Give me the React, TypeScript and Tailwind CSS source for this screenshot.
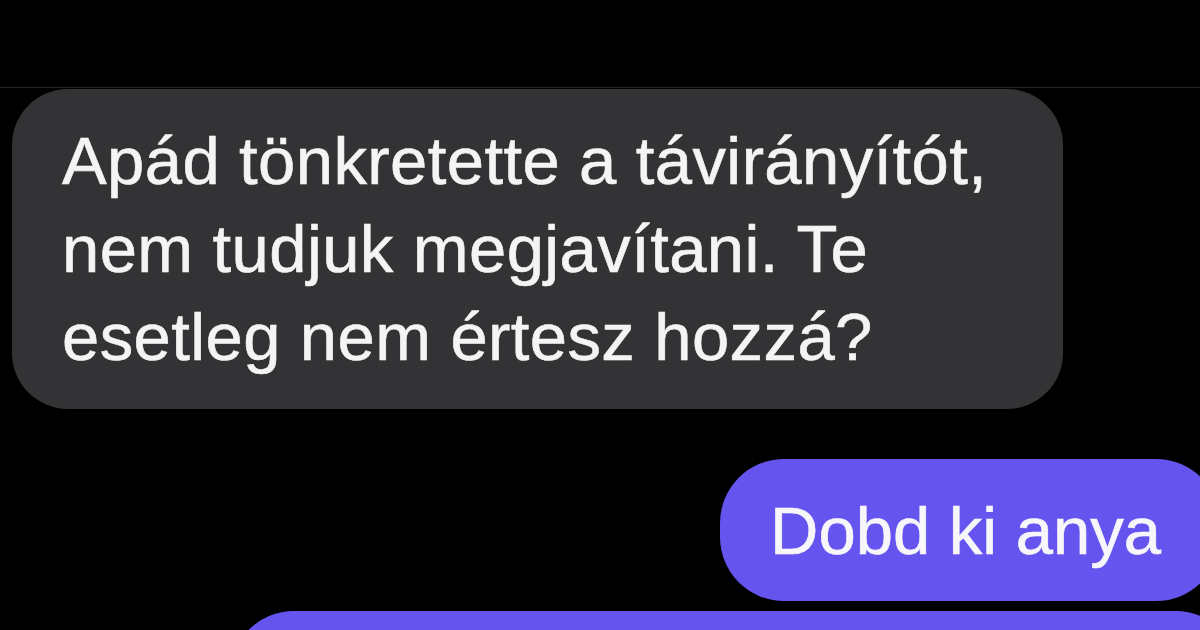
import React from "react";

const font = { fontFamily: '"Liberation Sans", Arial, sans-serif' };

export default function App() {
  return (
    <div
      className="w-[1200px] h-[630px] overflow-hidden bg-black text-white flex flex-col"
      style={font}
    >
      <div className="h-[88px] shrink-0 border-b border-[#262626]" />
      <div className="pl-[12px] pt-[1px]">
        <div className="w-[1051px] h-[320px] rounded-[56px] bg-[#333335] pl-[50px] pt-[28px] text-[67px] leading-[88px] tracking-[0.4px] text-[#f4f4f4] [-webkit-text-stroke:0.6px_#f4f4f4]">
          <div>Apád tönkretette a távirányítót,</div>
          <div>nem tudjuk megjavítani. Te</div>
          <div>esetleg nem értesz hozzá?</div>
        </div>
      </div>
      <div className="mt-[50px] flex justify-end mr-[-20px]">
        <div className="w-[500px] h-[142px] shrink-0 rounded-[64px] bg-[#6654ee] pl-[50px] pt-[28px] text-[67px] leading-[88px] text-[#f7f7fb] [-webkit-text-stroke:0.6px_#f7f7fb]">
          Dobd ki anya
        </div>
      </div>
      <div className="mt-[10px] flex justify-end mr-[-40px]">
        <div className="w-[1010px] h-[140px] shrink-0 rounded-[64px] bg-[#6654ee]" />
      </div>
    </div>
  );
}
